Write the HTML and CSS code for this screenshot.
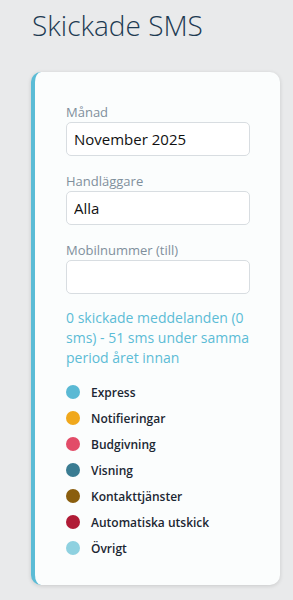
FILE: index.html
```html
<!DOCTYPE html>
<html lang="sv">
  <head>
    <meta charset="UTF-8" />
    <meta name="viewport" content="width=device-width, initial-scale=1.0" />
    <title>Skickade SMS</title>
    <link rel="stylesheet" href="styles.css">
  </head>
  <body>
    <h1 class="page-title">Skickade SMS</h1>

    <div class="card">
      <div class="form-group">
        <label for="month">Månad</label>
        <input type="text" id="month" value="November 2025" />
      </div>
      <div class="form-group">
        <label for="handler">Handläggare</label>
        <input type="text" id="handler" value="Alla" />
      </div>
      <div class="form-group">
        <label for="mobile">Mobilnummer (till)</label>
        <input type="text" id="mobile" />
      </div>

      <p class="summary">0 skickade meddelanden (0 sms) - 51 sms under samma period året innan</p>

      <ul class="legend">
        <li><span class="dot express"></span>Express</li>
        <li><span class="dot notify"></span>Notifieringar</li>
        <li><span class="dot bid"></span>Budgivning</li>
        <li><span class="dot viewing"></span>Visning</li>
        <li><span class="dot contact"></span>Kontakttjänster</li>
        <li><span class="dot auto"></span>Automatiska utskick</li>
        <li><span class="dot other"></span>Övrigt</li>
      </ul>
    </div>
  </body>
</html>
```

FILE: styles.css
```css
body {
  background-color: #e9eaeb;
  color: #1b2733;
  font-family: "Open Sans", sans-serif;
  margin: 0;
  padding: 0 13px 15px 31px;
}

.page-title {
  font-size: 28px;
  font-weight: 300;
  color: #1d3a52;
  margin: 0;
  padding: 5px 0 0 1px;
  line-height: 40px;
  height: 67px;
}

.card {
  background-color: #fbfdfd;
  border-left: 4px solid #5bbcd6;
  border-radius: 10px;
  box-shadow: 0 1px 4px rgba(0, 0, 0, 0.14);
  padding: 31px 30px 24px 31px;
}

.form-group {
  margin-bottom: 16px;
}

.form-group label {
  display: block;
  font-size: 13px;
  line-height: 18px;
  color: #7f8f9c;
  margin-bottom: 1px;
}

.form-group input {
  display: block;
  width: 100%;
  box-sizing: border-box;
  height: 34px;
  padding: 0 7px;
  border: 1px solid #d8dde1;
  border-radius: 5px;
  background-color: #fff;
  font-family: "Open Sans", sans-serif;
  font-size: 15px;
  color: #111;
}

.summary {
  margin: -2px 0 11px;
  font-size: 14px;
  line-height: 20px;
  color: #5bbcd6;
}

.legend {
  list-style: none;
  margin: 0;
  padding: 0;
}

.legend li {
  display: flex;
  align-items: center;
  height: 26px;
  font-size: 12px;
  font-weight: 600;
  color: #1b2733;
}

.dot {
  width: 14px;
  height: 14px;
  border-radius: 50%;
  margin-right: 11px;
}

.express { background-color: #5ab9d4; }
.notify { background-color: #f0a81c; }
.bid { background-color: #e24c68; }
.viewing { background-color: #3a7c92; }
.contact { background-color: #8a5e0e; }
.auto { background-color: #b01b36; }
.other { background-color: #8ed1e0; }
```
